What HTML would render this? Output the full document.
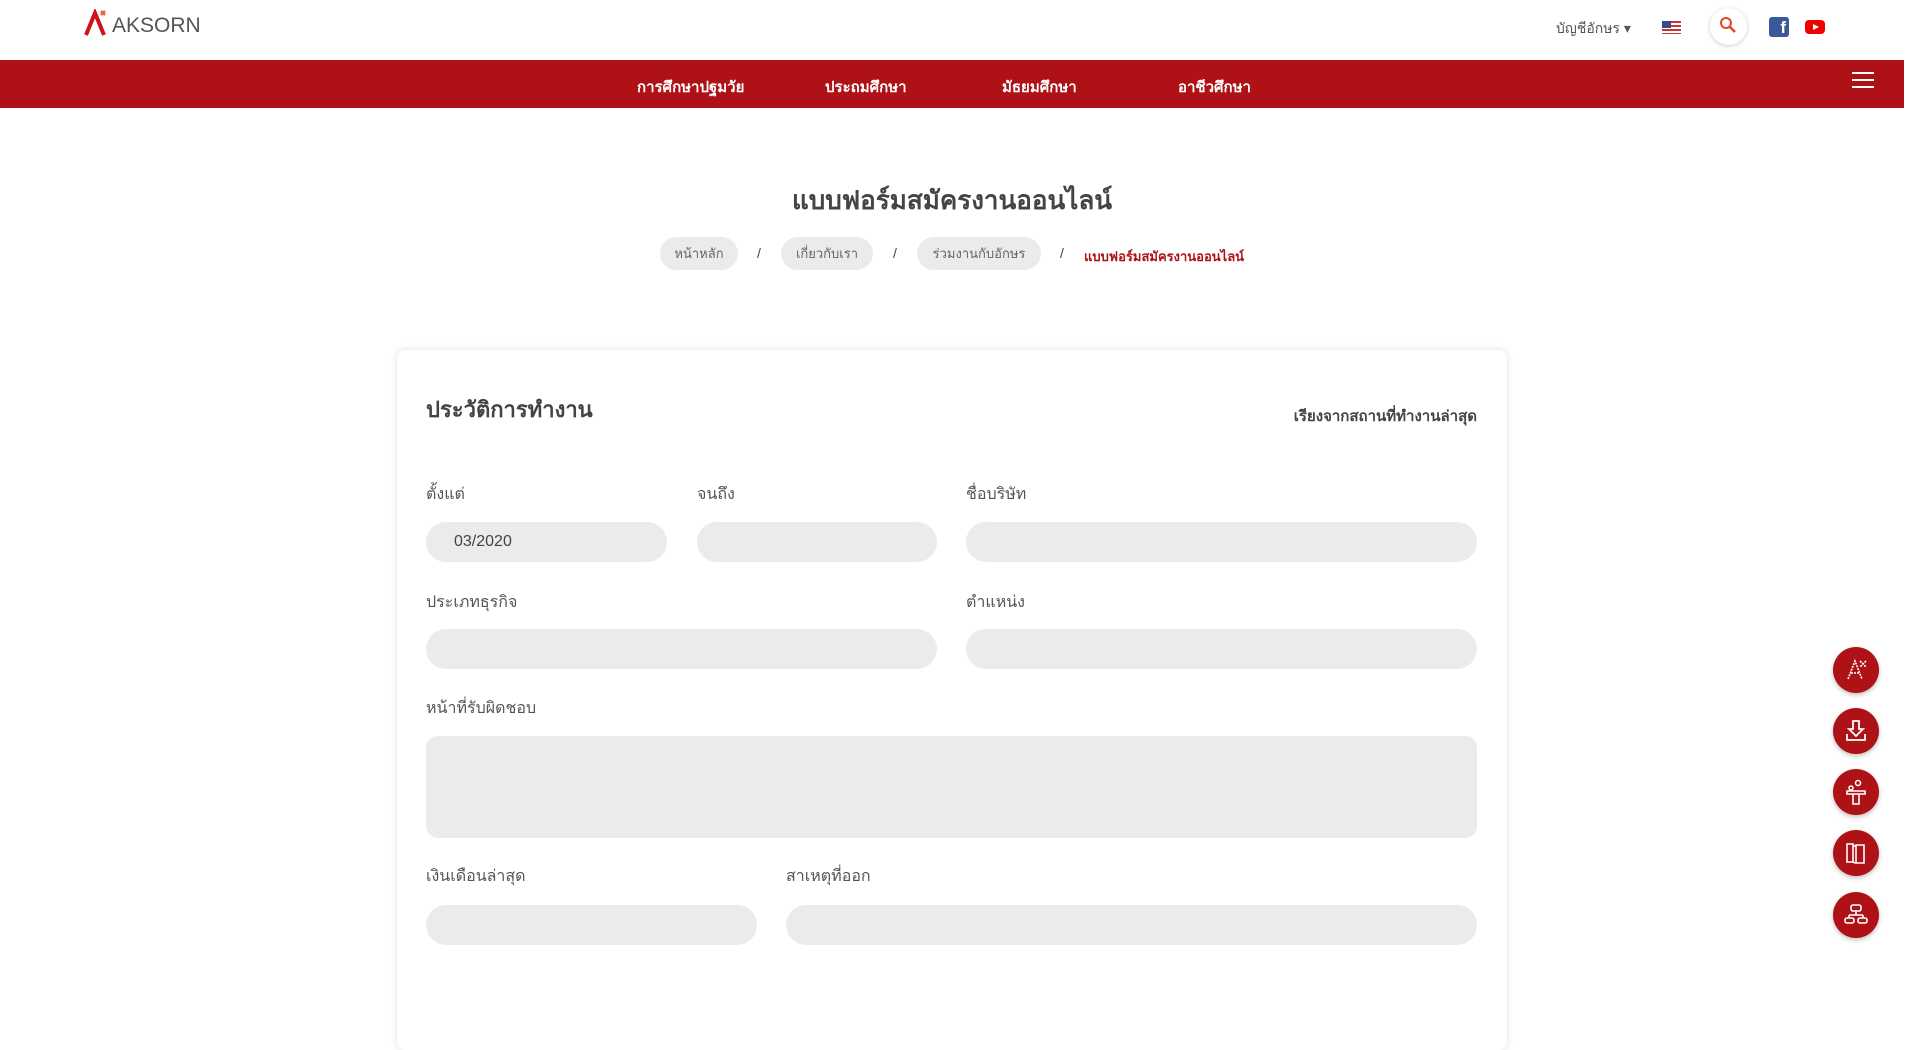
<!DOCTYPE html>
<html><head><meta charset="utf-8"><style>
*{box-sizing:border-box;margin:0;padding:0}
body{width:1920px;height:966px;overflow:hidden;background:#fff;font-family:"Liberation Sans","Noto Sans CJK SC",sans-serif;color:#444;position:relative}
.a{position:absolute;white-space:nowrap}
.nav{position:absolute;left:0;top:60px;width:1904px;height:48px;background:#ae1116}
.nav span{position:absolute;top:15px;color:#fff;font-size:15px;font-weight:bold}
.pill{position:absolute;top:237px;height:33px;border-radius:17px;background:#ebebeb;color:#666;font-size:13px;line-height:33px;text-align:center}
.sl{position:absolute;top:245px;font-size:14px;color:#444}
.card{position:absolute;left:397px;top:350px;width:1110px;height:700px;background:#fff;border-radius:8px;box-shadow:0 0 8px rgba(0,0,0,.12)}
.lb{position:absolute;font-size:16px;color:#555}
.in{position:absolute;background:#ebebeb;border-radius:20px;height:40px}
.fb{position:absolute;left:1833px;width:46px;height:46px;border-radius:50%;background:#ae1116;box-shadow:0 2px 5px rgba(0,0,0,.25)}
</style></head><body>
<svg class="a" style="left:84px;top:9px" width="28" height="28" viewBox="0 0 28 28"><path d="M2 26 L11 4 L20 26" stroke="#d0111b" stroke-width="4" fill="none"/><path d="M17 2 l4 4 M21 2 l-4 4" stroke="#e63" stroke-width="2.5"/></svg>
<div class="a" style="left:112px;top:14px;font-size:21px;color:#555">AKSORN</div>
<div class="a" style="left:1556px;top:18px;font-size:14px;color:#555">บัญชีอักษร ▾</div>
<div class="a" style="left:1662px;top:21px;width:19px;height:13px;background:repeating-linear-gradient(#c33 0 2px,#fff 2px 4px)"><div style="width:9px;height:7px;background:#3b4a8a"></div></div>
<div class="a" style="left:1710px;top:8px;width:37px;height:37px;border-radius:50%;background:#fff;box-shadow:0 1px 5px rgba(0,0,0,.2)"></div>
<svg class="a" style="left:1719px;top:16px" width="18" height="18" viewBox="0 0 18 18"><circle cx="7" cy="7" r="5" stroke="#e8441f" stroke-width="2" fill="none"/><path d="M11 11 L16 16" stroke="#e8441f" stroke-width="2.5"/></svg>
<div class="a" style="left:1769px;top:17px;width:20px;height:20px;background:#3b5998;border-radius:3px;color:#fff;font-weight:bold;font-size:17px;text-align:right;padding-right:3px;line-height:22px">f</div>
<div class="a" style="left:1805px;top:20px;width:20px;height:14px;background:#e00;border-radius:4px"><div style="margin:4px 0 0 8px;width:0;height:0;border-left:6px solid #fff;border-top:3px solid transparent;border-bottom:3px solid transparent"></div></div>
<div class="nav"><span style="left:637px">การศึกษาปฐมวัย</span><span style="left:825px">ประถมศึกษา</span><span style="left:1002px">มัธยมศึกษา</span><span style="left:1178px">อาชีวศึกษา</span>
<div style="position:absolute;left:1852px;top:12px;width:22px;height:16px;border-top:2px solid #fff;border-bottom:2px solid #fff"><div style="margin-top:5px;height:2px;background:#fff"></div></div></div>
<div class="a" style="left:0;width:1904px;top:180px;text-align:center;font-size:26px;font-weight:bold;color:#444">แบบฟอร์มสมัครงานออนไลน์</div>
<div class="pill" style="left:660px;width:78px">หน้าหลัก</div><div class="sl" style="left:757px">/</div>
<div class="pill" style="left:781px;width:92px">เกี่ยวกับเรา</div><div class="sl" style="left:893px">/</div>
<div class="pill" style="left:917px;width:124px">ร่วมงานกับอักษร</div><div class="sl" style="left:1060px">/</div>
<div class="a" style="left:1084px;top:246px;font-size:13px;color:#ae1116;font-weight:bold">แบบฟอร์มสมัครงานออนไลน์</div>
<div class="card"></div>
<div class="a" style="left:426px;top:392px;font-size:22px;font-weight:bold;color:#444">ประวัติการทำงาน</div>
<div class="a" style="left:1477px;top:404px;transform:translateX(-100%);font-size:15px;font-weight:bold;color:#444">เรียงจากสถานที่ทำงานล่าสุด</div>
<div class="lb" style="left:426px;top:482px">ตั้งแต่</div><div class="lb" style="left:697px;top:482px">จนถึง</div><div class="lb" style="left:966px;top:482px">ชื่อบริษัท</div>
<div class="in" style="left:426px;top:522px;width:241px;font-size:16px;line-height:40px;padding-left:28px;color:#444">03/2020</div>
<div class="in" style="left:697px;top:522px;width:240px"></div><div class="in" style="left:966px;top:522px;width:511px"></div>
<div class="lb" style="left:426px;top:590px">ประเภทธุรกิจ</div><div class="lb" style="left:966px;top:590px">ตำแหน่ง</div>
<div class="in" style="left:426px;top:629px;width:511px"></div><div class="in" style="left:966px;top:629px;width:511px"></div>
<div class="lb" style="left:426px;top:696px">หน้าที่รับผิดชอบ</div>
<div class="in" style="left:426px;top:736px;width:1051px;height:102px;border-radius:12px"></div>
<div class="lb" style="left:426px;top:864px">เงินเดือนล่าสุด</div><div class="lb" style="left:786px;top:864px">สาเหตุที่ออก</div>
<div class="in" style="left:426px;top:905px;width:331px"></div><div class="in" style="left:786px;top:905px;width:691px"></div>
<div class="fb" style="top:647px"><svg width="46" height="46"><path d="M15 32 L22 14 L29 32 M18 26 h8 M27 14 l6 6 M33 14 l-6 6" stroke="#fff" stroke-width="1.6" fill="none" stroke-dasharray="2 1"/></svg></div>
<div class="fb" style="top:708px"><svg width="46" height="46"><path d="M20 13 v8 h-4 l7 7 l7 -7 h-4 v-8 z M14 26 v6 h18 v-6" stroke="#fff" stroke-width="1.8" fill="none"/></svg></div>
<div class="fb" style="top:769px"><svg width="46" height="46"><circle cx="25" cy="14" r="2.5" stroke="#fff" fill="none" stroke-width="1.5"/><circle cx="18" cy="19" r="2" stroke="#fff" fill="none" stroke-width="1.5"/><path d="M14 22 h18 v3 h-18 z M20 25 v10 h6 v-10" stroke="#fff" stroke-width="1.6" fill="none"/></svg></div>
<div class="fb" style="top:830px"><svg width="46" height="46"><path d="M14 14 h6 v18 h-6 z M20 17 l3 -2 h8 v18 h-9 l-2 -1 M23 15 v18" stroke="#fff" stroke-width="1.6" fill="none"/></svg></div>
<div class="fb" style="top:892px"><svg width="46" height="46"><rect x="18" y="13" width="10" height="6" rx="2" stroke="#fff" fill="none" stroke-width="1.6"/><path d="M23 19 v4 M16 23 h14 M16 23 v3 M30 23 v3" stroke="#fff" stroke-width="1.6"/><rect x="12" y="26" width="9" height="5" rx="2" stroke="#fff" fill="none" stroke-width="1.6"/><rect x="25" y="26" width="9" height="5" rx="2" stroke="#fff" fill="none" stroke-width="1.6"/></svg></div>
</body></html>
